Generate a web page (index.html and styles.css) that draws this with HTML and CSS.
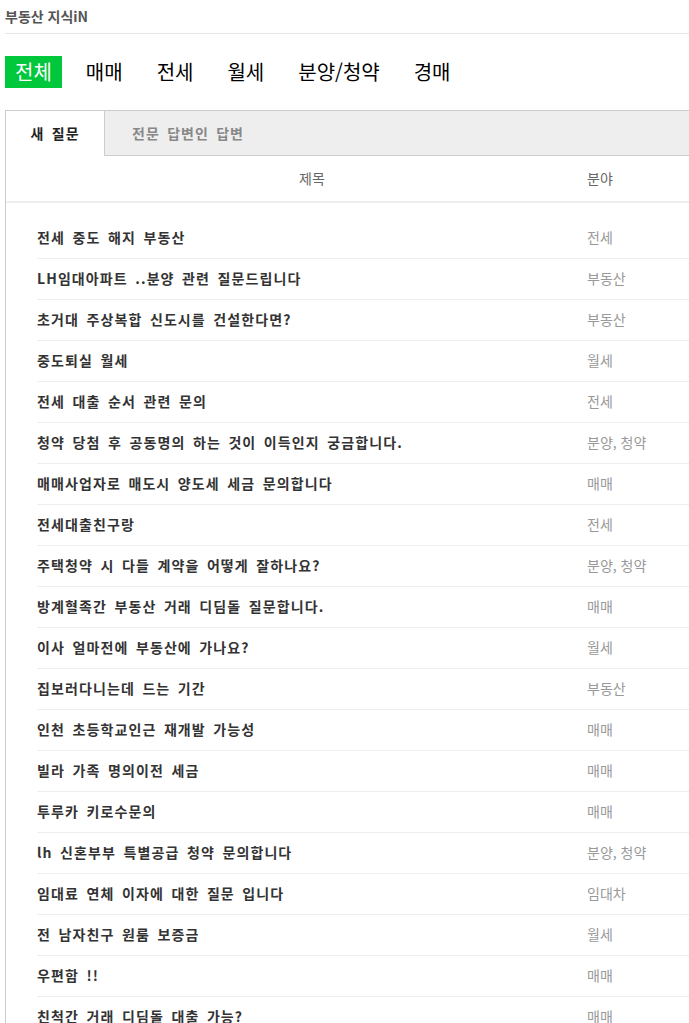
FILE: index.html
```html
<!DOCTYPE html>
<html lang="ko">
<head>
<meta charset="utf-8">
<title>부동산 지식iN</title>
<link rel="stylesheet" href="styles.css">
</head>
<body>

<h2 class="site-title">부동산 지식iN</h2>

<ul class="cats">
  <li class="on">전체</li>
  <li>매매</li>
  <li>전세</li>
  <li>월세</li>
  <li>분양/청약</li>
  <li>경매</li>
</ul>

<div class="board">
  <div class="tabs">
    <div class="tab active">새 질문</div>
    <div class="tab">전문 답변인 답변</div>
  </div>

  <div class="thead">
    <span class="col-title">제목</span>
    <span class="col-cat">분야</span>
  </div>

  <ul class="list">
    <li><span class="col-title">전세 중도 해지 부동산</span><span class="col-cat">전세</span></li>
    <li><span class="col-title">LH임대아파트 ..분양 관련 질문드립니다</span><span class="col-cat">부동산</span></li>
    <li><span class="col-title">초거대 주상복합 신도시를 건설한다면?</span><span class="col-cat">부동산</span></li>
    <li><span class="col-title">중도퇴실 월세</span><span class="col-cat">월세</span></li>
    <li><span class="col-title">전세 대출 순서 관련 문의</span><span class="col-cat">전세</span></li>
    <li><span class="col-title">청약 당첨 후 공동명의 하는 것이 이득인지 궁금합니다.</span><span class="col-cat">분양, 청약</span></li>
    <li><span class="col-title">매매사업자로 매도시 양도세 세금 문의합니다</span><span class="col-cat">매매</span></li>
    <li><span class="col-title">전세대출친구랑</span><span class="col-cat">전세</span></li>
    <li><span class="col-title">주택청약 시 다들 계약을 어떻게 잘하나요?</span><span class="col-cat">분양, 청약</span></li>
    <li><span class="col-title">방계혈족간 부동산 거래 디딤돌 질문합니다.</span><span class="col-cat">매매</span></li>
    <li><span class="col-title">이사 얼마전에 부동산에 가나요?</span><span class="col-cat">월세</span></li>
    <li><span class="col-title">집보러다니는데 드는 기간</span><span class="col-cat">부동산</span></li>
    <li><span class="col-title">인천 초등학교인근 재개발 가능성</span><span class="col-cat">매매</span></li>
    <li><span class="col-title">빌라 가족 명의이전 세금</span><span class="col-cat">매매</span></li>
    <li><span class="col-title">투루카 키로수문의</span><span class="col-cat">매매</span></li>
    <li><span class="col-title">lh 신혼부부 특별공급 청약 문의합니다</span><span class="col-cat">분양, 청약</span></li>
    <li><span class="col-title">임대료 연체 이자에 대한 질문 입니다</span><span class="col-cat">임대차</span></li>
    <li><span class="col-title">전 남자친구 원룸 보증금</span><span class="col-cat">월세</span></li>
    <li><span class="col-title">우편함 !!</span><span class="col-cat">매매</span></li>
    <li><span class="col-title">친척간 거래 디딤돌 대출 가능?</span><span class="col-cat">매매</span></li>
  </ul>
</div>

</body>
</html>
```

FILE: styles.css
```css
body {
  margin: 0 0 0 5px;
  font-family: "Noto Sans CJK KR", "Noto Sans", sans-serif;
  color: #222;
  overflow: hidden;
}
ul {
  list-style: none;
  margin: 0;
  padding: 0;
}

.site-title {
  margin: 0;
  height: 33px;
  line-height: 33px;
  font-size: 14px;
  font-weight: bold;
  color: #555;
  border-bottom: 1px solid #e5e5e5;
}

.cats {
  display: flex;
  gap: 14px;
  margin-top: 22px;
}
.cats li {
  height: 32px;
  line-height: 32px;
  padding: 0 10px;
  font-size: 20px;
  color: #000;
}
.cats li.on {
  background-color: #00c73c;
  color: #fff;
}

.board {
  margin-top: 22px;
  border-left: 1px solid #ccc;
  border-top: 1px solid #ccc;
}

.tabs {
  display: flex;
  height: 45px;
  background-color: #eee;
}
.tab {
  line-height: 44px;
  font-size: 14px;
  font-weight: bold;
  letter-spacing: 1px;
  word-spacing: 2.5px;
  color: #888;
  padding-left: 27px;
  flex: 1;
  border-bottom: 1px solid #ccc;
}
.tab.active {
  flex: 0 0 99px;
  box-sizing: border-box;
  padding-left: 0;
  text-align: center;
  background-color: #fff;
  color: #222;
  border-right: 1px solid #ccc;
  border-bottom: none;
}

.thead {
  display: flex;
  height: 45px;
  line-height: 45px;
  padding-left: 31px;
  font-size: 14px;
  color: #666;
  border-bottom: 2px solid #eee;
}
.thead .col-title {
  text-align: center;
}

.col-title {
  flex: 0 0 550px;
}
.col-cat {
  flex: 1;
}

.list {
  padding-top: 15px;
}
.list li {
  display: flex;
  margin-left: 31px;
  height: 40px;
  line-height: 39px;
  font-size: 14px;
  border-bottom: 1px solid #eee;
}
.list .col-title {
  font-weight: bold;
  letter-spacing: 1.1px;
  word-spacing: 2.5px;
  color: #333;
}
.list .col-cat {
  color: #999;
}
```
